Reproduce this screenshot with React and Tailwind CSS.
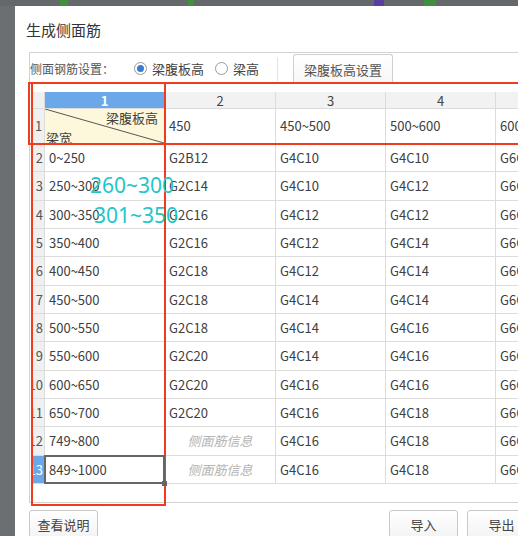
import React from "react";

const rows = [
  ["0~250", "G2B12", "G4C10", "G4C10", "G6C12"],
  ["250~300", "G2C14", "G4C10", "G4C12", "G6C12"],
  ["300~350", "G2C16", "G4C12", "G4C12", "G6C12"],
  ["350~400", "G2C16", "G4C12", "G4C14", "G6C14"],
  ["400~450", "G2C18", "G4C12", "G4C14", "G6C14"],
  ["450~500", "G2C18", "G4C14", "G4C14", "G6C14"],
  ["500~550", "G2C18", "G4C14", "G4C16", "G6C16"],
  ["550~600", "G2C20", "G4C14", "G4C16", "G6C16"],
  ["600~650", "G2C20", "G4C16", "G4C16", "G6C16"],
  ["650~700", "G2C20", "G4C16", "G4C18", "G6C18"],
  ["749~800", null, "G4C16", "G4C18", "G6C18"],
  ["849~1000", null, "G4C16", "G4C18", "G6C18"],
];

const widths = ["w-[120px]", "w-[111px]", "w-[110px]", "w-[110px]", "w-[110px]"];
const cell = "shrink-0 border-r border-b border-[#dcdcdc] flex items-center overflow-hidden whitespace-nowrap";

function Radio({ checked, label }) {
  return (
    <div className="flex items-center">
      <span className="w-[13px] h-[13px] rounded-full border border-[#9a9a9a] bg-white flex items-center justify-center">
        {checked && <span className="w-[7px] h-[7px] rounded-full bg-[#3a7bd5]" />}
      </span>
      <span className="ml-[5px] text-[13px] text-[#444]">{label}</span>
    </div>
  );
}

function Btn({ children, className = "" }) {
  return (
    <div className={"shrink-0 w-[69px] h-[30px] border border-[#c9c9c9] rounded-[3px] bg-gradient-to-b from-white to-[#f3f3f3] flex items-center justify-center text-[13px] text-[#444] " + className}>
      {children}
    </div>
  );
}

export default function App() {
  return (
    <div className="relative w-[518px] h-[536px] overflow-hidden bg-white flex flex-col font-['Noto_Sans_CJK_SC','Noto_Sans',sans-serif]">
      {/* backdrop strip */}
      <div className="h-[6px] shrink-0 bg-[#65686a] flex">
        <span className="ml-[60px] w-[8px] bg-[#3f8f3f]" />
        <span className="ml-[120px] w-[6px] bg-[#3f8f3f]" />
        <span className="ml-[180px] w-[10px] bg-[#5a3fa0]" />
        <span className="ml-[40px] w-[12px] bg-[#3f8f3f]" />
      </div>
      <div className="flex flex-1 min-h-0">
        <div className="w-[15px] shrink-0 bg-[#6c6f71]" />
        <div className="flex-1 min-w-0 pl-[14px] flex flex-col">
          <div className="pt-[15px] text-[15px] leading-[18px] text-[#333] -ml-[3px]">生成侧面筋</div>

          {/* panel */}
          <div className="mt-[13px] h-[451px] shrink-0 border border-r-0 border-[#d3d3d3] flex flex-col">
            <div className="h-[31px] flex items-center whitespace-nowrap">
              <span className="text-[12px] text-[#555]">侧面钢筋设置：</span>
              <div className="ml-[20px]"><Radio checked label="梁腹板高" /></div>
              <div className="ml-[11px]"><Radio label="梁高" /></div>
              <span className="ml-[18px] w-px h-[24px] bg-[#e2e2e2]" />
              <div className="ml-[15px] self-end h-[30px] px-[10px] border border-b-0 border-[#cfcfcf] rounded-t-[3px] bg-gradient-to-b from-white to-[#f6f6f6] flex items-center text-[13px] text-[#555]">
                梁腹板高设置
              </div>
            </div>

            {/* grid */}
            <div className="mt-[8px] pl-[3px] flex flex-col text-[13px] text-[#404040]">
              <div className="flex h-[17px]">
                <div className={cell + " w-[12px] bg-[#f0f0f0]"} />
                {["1", "2", "3", "4", "5"].map((h, i) => (
                  <div key={h} className={cell + " " + widths[i] + " justify-center leading-none " + (i === 0 ? "bg-[#6aa8ea] text-white font-bold" : "bg-[#f2f2f2] text-[#444]")}>
                    {h}
                  </div>
                ))}
              </div>
              <div className="flex h-[35px]">
                <div className={cell + " w-[12px] bg-[#f0f0f0] justify-center text-[#555]"}>1</div>
                <div className={cell + " " + widths[0] + " relative bg-[#fdf8dc]"}>
                  <svg className="absolute inset-0" width="120" height="35">
                    <line x1="0" y1="0" x2="119" y2="34" stroke="#555" strokeWidth="1" />
                  </svg>
                  <span className="absolute right-[6px] top-[1px] leading-[16px]">梁腹板高</span>
                  <span className="absolute left-[1px] top-[21px] leading-[16px]">梁宽</span>
                </div>
                {["450", "450~500", "500~600", "600~700"].map((v, i) => (
                  <div key={v} className={cell + " " + widths[i + 1] + " pl-[4px]"}>{v}</div>
                ))}
              </div>
              {rows.map((r, ri) => {
                const sel = ri === rows.length - 1;
                return (
                  <div key={ri} className="flex h-[28.33px]">
                    <div className={cell + " w-[12px] justify-end pr-[1px] " + (sel ? "bg-[#6aa8ea] text-white" : "bg-[#f0f0f0] text-[#555]")}>
                      {ri + 2}
                    </div>
                    {r.map((v, ci) => (
                      <div key={ci} className={cell + " " + widths[ci] + " pl-[4px] relative overflow-visible" + (ci === 0 && sel ? " z-10" : "")}>
                        {v === null ? (
                          <span className="w-full text-center pr-[4px] italic text-[#b4b4b4]">侧面筋信息</span>
                        ) : (
                          v
                        )}
                        {ci === 0 && sel && (
                          <>
                            <span className="absolute -left-px -top-px -right-px -bottom-px border-2 border-[#666]" />
                            <span className="absolute -right-[3px] -bottom-[3px] w-[5px] h-[5px] bg-[#666]" />
                          </>
                        )}
                      </div>
                    ))}
                  </div>
                );
              })}
            </div>
          </div>

          <div className="mt-[7px] flex whitespace-nowrap">
            <Btn>查看说明</Btn>
            <Btn className="ml-[291px]">导入</Btn>
            <Btn className="ml-[9px]">导出</Btn>
          </div>
        </div>
      </div>

      {/* annotation overlays */}
      <div className="absolute left-[28px] top-[82px] w-[520px] h-[63px] border-2 border-[#f03c1e]" />
      <div className="absolute left-[31px] top-[82px] w-[135px] h-[424px] border-2 border-[#f03c1e]" />
      <div className="absolute left-[90px] top-[173px] text-[21px] leading-[24px] text-[#1fc6c8] font-['Noto_Sans',sans-serif]">260~300</div>
      <div className="absolute left-[94px] top-[203px] text-[21px] leading-[24px] text-[#1fc6c8] font-['Noto_Sans',sans-serif]">301~350</div>
    </div>
  );
}
